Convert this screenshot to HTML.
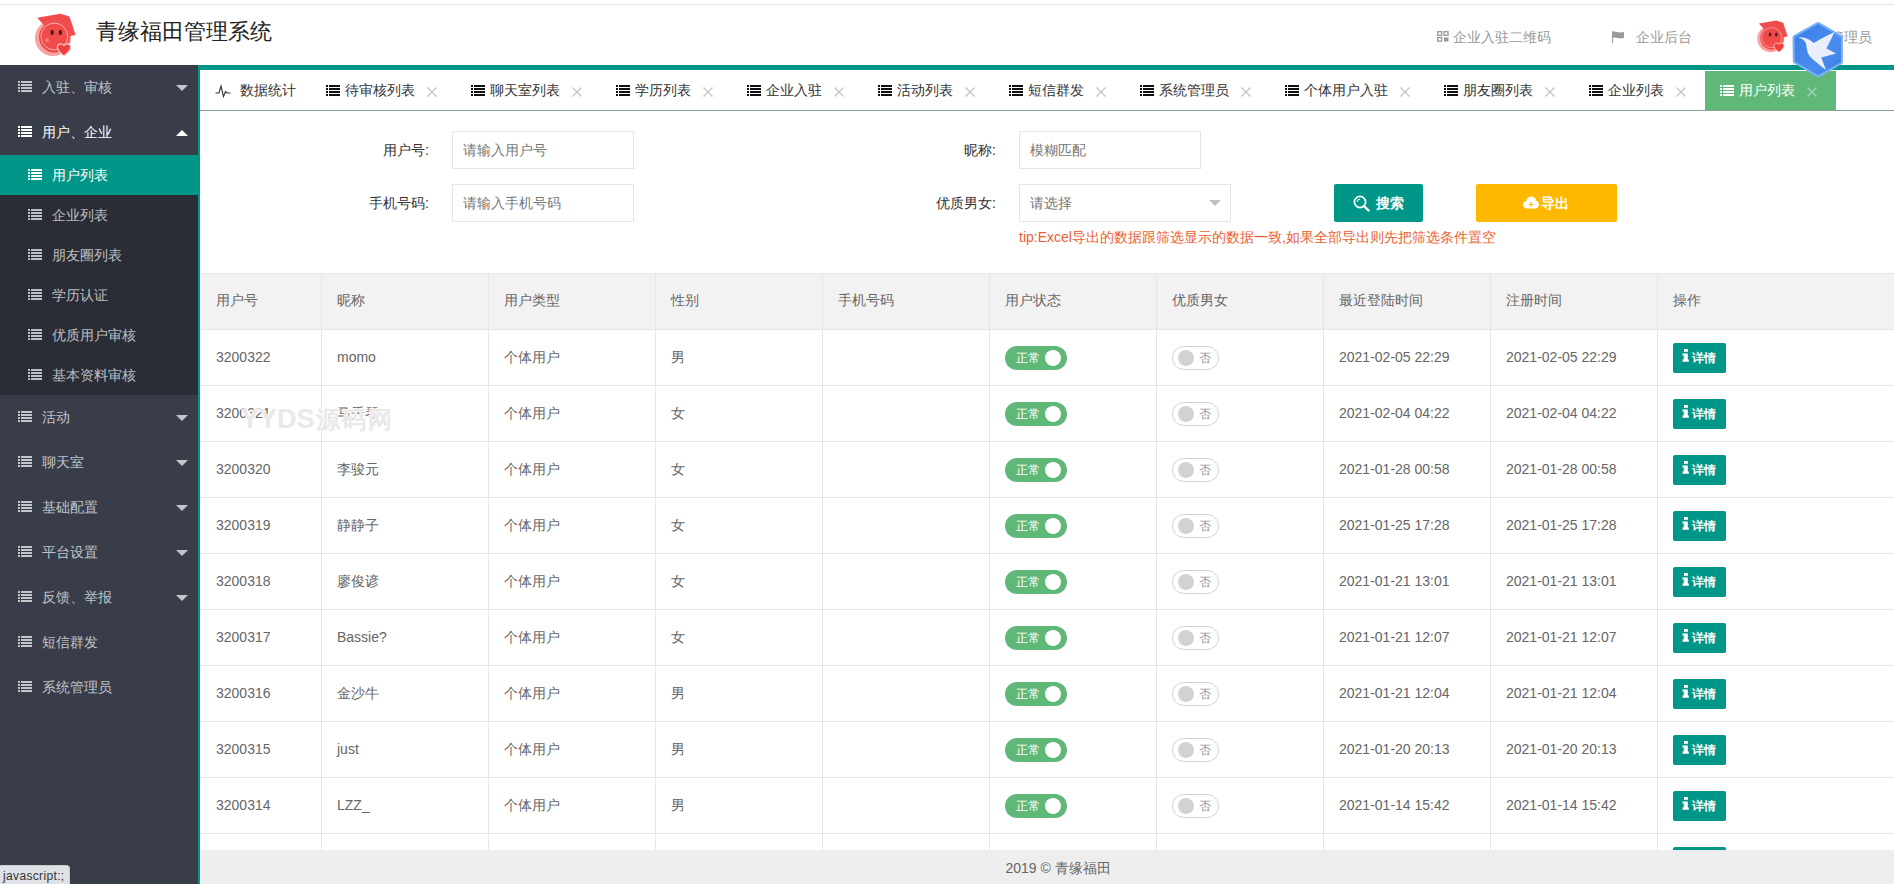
<!DOCTYPE html>
<html><head><meta charset="utf-8">
<style>
*{box-sizing:border-box;margin:0;padding:0}
html,body{width:1894px;height:884px;overflow:hidden;background:#fff;font-family:"Liberation Sans",sans-serif;font-size:14px;color:#333}
.abs{position:absolute}
#topline{left:0;top:4px;width:1894px;height:1px;background:#e2e2e2}
#title{left:96px;top:17px;font-size:22px;line-height:30px;color:#222;white-space:nowrap}
.hdr{top:27px;line-height:20px;color:#999;white-space:nowrap}
#side{left:0;top:65px;width:198px;height:819px;background:#393D49}
.ni{position:absolute;left:0;width:198px;height:45px;line-height:45px;color:rgba(255,255,255,.7);white-space:nowrap}
.ni .ic{position:absolute;left:18px;top:16px}
.ni span{position:absolute;left:42px;top:0}
.ni .arr{position:absolute;left:176px;top:20px;width:0;height:0;border-left:6px solid transparent;border-right:6px solid transparent;border-top:6px solid rgba(255,255,255,.7)}
.ni .arr.up{border-top:0;border-bottom:6px solid #fff}
.sub{position:absolute;left:0;width:198px;height:40px;line-height:40px;background:#2A2D36;color:rgba(255,255,255,.7);white-space:nowrap}
.sub .ic{position:absolute;left:28px;top:14px}
.sub span{position:absolute;left:52px;top:0}
.sub.on{background:#009688;color:#fff}
#mainborder{left:198px;top:65px;width:2px;height:819px;background:#009688}
#maintop{left:198px;top:65px;width:1696px;height:5px;background:#009688}
#tabline{left:200px;top:110px;width:1694px;height:1px;background:#8a9f90}
.tab{position:absolute;top:71px;height:39px;line-height:39px;color:#333;white-space:nowrap}
.tab .ic{position:absolute;left:15px;top:14px}
.tab span{position:absolute;left:34px;top:0}
.tab .x{position:absolute;top:16px}
.tab.on{background:#5FB878;color:#fff}
.lbl{position:absolute;line-height:20px;text-align:right;color:#333;white-space:nowrap}
.inp{position:absolute;height:38px;border:1px solid #e6e6e6;line-height:36px;padding-left:10px;color:#777;white-space:nowrap}
.btn{position:absolute;top:184px;height:38px;border-radius:2px;color:#fff;white-space:nowrap}
#tip{left:1019px;top:227px;font-size:14px;line-height:20px;color:#ea5f35;white-space:nowrap}
#thead{left:200px;top:273px;width:1694px;height:56px;background:#f2f2f2}
.hl{position:absolute;left:200px;width:1694px;height:1px;background:#e6e6e6}
.vl{position:absolute;top:273px;width:1px;height:577px;background:#e6e6e6}
.c{position:absolute;line-height:20px;color:#666;white-space:nowrap}
.sw{position:absolute;height:24px;border-radius:20px;}
.sw.on{width:62px;background:#5FB878}
.sw.on i{position:absolute;left:40px;top:4px;width:16px;height:16px;border-radius:50%;background:#fff}
.sw.on em{position:absolute;left:11px;top:0;line-height:24px;font-size:12px;font-style:normal;color:#fff}
.sw.off{width:47px;border:1px solid #d2d2d2;background:#fff}
.sw.off i{position:absolute;left:5px;top:3px;width:16px;height:16px;border-radius:50%;background:#d2d2d2}
.sw.off em{position:absolute;left:26px;top:0;line-height:22px;font-size:12px;font-style:normal;color:#999}
.det{position:absolute;width:53px;height:30px;border-radius:2px;background:#009688;color:#fff;font-size:12px;line-height:30px;white-space:nowrap}
.wm{left:241px;top:404px;font-size:27px;font-weight:bold;line-height:30px;letter-spacing:0;white-space:nowrap}
.wc{font-size:24px;letter-spacing:2px;margin-left:1px}
#footer{left:200px;top:850px;width:1694px;height:34px;background:#eee;text-align:center;line-height:37px;padding-left:22px;color:#666}
#status{left:0;top:865px;width:70px;height:19px;background:#dee1e6;border-top-right-radius:4px;border:1px solid #c9ccd1;border-left:0;border-bottom:0;font-size:12px;line-height:21px;padding-left:3px;letter-spacing:0.35px;color:#333}
</style></head><body>
<div class="abs" id="topline"></div>
<!-- logo -->
<svg class="abs" style="left:28px;top:8px" width="56" height="54" viewBox="0 0 56 54">
  <path d="M9.2 9.8 L32.4 5.8 L41.5 8.5 L47.6 26.9 L42 28 L24 26 Z" fill="#f04c4c"/>
  <circle cx="25" cy="30" r="18" fill="#f25656" opacity="0.55"/>
  <circle cx="26.5" cy="29" r="15.5" fill="#f04a4a"/>
  <circle cx="26.3" cy="28.5" r="13.4" fill="none" stroke="#fbb0b0" stroke-width="1"/>
  <ellipse cx="24.1" cy="24.4" rx="1.6" ry="2.6" fill="#4a1818"/>
  <ellipse cx="32.4" cy="24.4" rx="1.6" ry="2.6" fill="#4a1818"/>
  <circle cx="19" cy="32" r="2" fill="#f78080"/>
  <path d="M36 48 C31 44 28.5 41 29.5 38 C30.5 35.5 34 35 36 37.5 C38 35 41.5 35.5 42.5 38 C43.5 41 41 44 36 48 Z" fill="#ee3e3e" stroke="#fbd0d0" stroke-width="1.2"/>
</svg>
<div class="abs" id="title">青缘福田管理系统</div>
<!-- header right -->
<svg class="abs" style="left:1437px;top:31px" width="12" height="11" viewBox="0 0 12 11"><g fill="none" stroke="#999" stroke-width="1.3"><rect x="0.7" y="0.7" width="4" height="3.6"/><rect x="7" y="0.7" width="4" height="3.6"/><rect x="0.7" y="6.5" width="4" height="3.6"/></g><rect x="7" y="6.5" width="4.5" height="4" fill="#999"/></svg>
<div class="abs hdr" style="left:1453px">企业入驻二维码</div>
<svg class="abs" style="left:1611px;top:31px" width="14" height="12" viewBox="0 0 14 12"><path d="M1 0 L2 0 L2 12 L1 12 Z" fill="#999"/><path d="M2 1 C5 -0.5 7 2.5 13 1 L13 7 C7 8.5 5 5.5 2 7 Z" fill="#999"/></svg>
<div class="abs hdr" style="left:1636px">企业后台</div>
<svg class="abs" style="left:1752px;top:16px" width="42" height="41" viewBox="0 0 56 54">
  <path d="M9.2 9.8 L32.4 5.8 L41.5 8.5 L47.6 26.9 L42 28 L24 26 Z" fill="#f04c4c"/>
  <circle cx="25" cy="30" r="18" fill="#f25656" opacity="0.55"/>
  <circle cx="26.5" cy="29" r="15.5" fill="#f04a4a"/>
  <circle cx="26.3" cy="28.5" r="13.4" fill="none" stroke="#fbb0b0" stroke-width="1"/>
  <ellipse cx="24.1" cy="24.4" rx="1.6" ry="2.6" fill="#4a1818"/>
  <ellipse cx="32.4" cy="24.4" rx="1.6" ry="2.6" fill="#4a1818"/>
  <path d="M36 48 C31 44 28.5 41 29.5 38 C30.5 35.5 34 35 36 37.5 C38 35 41.5 35.5 42.5 38 C43.5 41 41 44 36 48 Z" fill="#ee3e3e" stroke="#fbd0d0" stroke-width="1.2"/>
</svg>
<div class="abs hdr" style="left:1830px">管理员</div>


<!-- sidebar -->
<div class="abs" id="side">
  <div class="ni" style="top:0"><svg class="ic" width="14" height="11"><use href="#li"/></svg><span>入驻、审核</span><i class="arr"></i></div>
  <div class="ni" style="top:45px;color:#fff"><svg class="ic" width="14" height="11" style="color:#fff"><use href="#li"/></svg><span>用户、企业</span><i class="arr up"></i></div>
  <div class="sub on" style="top:90px"><svg class="ic" width="14" height="11"><use href="#li"/></svg><span>用户列表</span></div>
  <div class="sub" style="top:130px"><svg class="ic" width="14" height="11"><use href="#li"/></svg><span>企业列表</span></div>
  <div class="sub" style="top:170px"><svg class="ic" width="14" height="11"><use href="#li"/></svg><span>朋友圈列表</span></div>
  <div class="sub" style="top:210px"><svg class="ic" width="14" height="11"><use href="#li"/></svg><span>学历认证</span></div>
  <div class="sub" style="top:250px"><svg class="ic" width="14" height="11"><use href="#li"/></svg><span>优质用户审核</span></div>
  <div class="sub" style="top:290px"><svg class="ic" width="14" height="11"><use href="#li"/></svg><span>基本资料审核</span></div>
  <div class="ni" style="top:330px"><svg class="ic" width="14" height="11"><use href="#li"/></svg><span>活动</span><i class="arr"></i></div>
  <div class="ni" style="top:375px"><svg class="ic" width="14" height="11"><use href="#li"/></svg><span>聊天室</span><i class="arr"></i></div>
  <div class="ni" style="top:420px"><svg class="ic" width="14" height="11"><use href="#li"/></svg><span>基础配置</span><i class="arr"></i></div>
  <div class="ni" style="top:465px"><svg class="ic" width="14" height="11"><use href="#li"/></svg><span>平台设置</span><i class="arr"></i></div>
  <div class="ni" style="top:510px"><svg class="ic" width="14" height="11"><use href="#li"/></svg><span>反馈、举报</span><i class="arr"></i></div>
  <div class="ni" style="top:555px"><svg class="ic" width="14" height="11"><use href="#li"/></svg><span>短信群发</span></div>
  <div class="ni" style="top:600px"><svg class="ic" width="14" height="11"><use href="#li"/></svg><span>系统管理员</span></div>
</div>
<svg width="0" height="0" style="position:absolute">
  <defs>
    <g id="li" fill="currentColor"><rect x="0" y="0" width="2" height="2"/><rect x="3" y="0" width="11" height="2"/><rect x="0" y="3" width="2" height="2"/><rect x="3" y="3" width="11" height="2"/><rect x="0" y="6" width="2" height="2"/><rect x="3" y="6" width="11" height="2"/><rect x="0" y="9" width="2" height="2"/><rect x="3" y="9" width="11" height="2"/></g>
    <g id="xx" stroke="currentColor" stroke-width="1.4" fill="none"><path d="M0.5 0.5 L9.5 9.5 M9.5 0.5 L0.5 9.5"/></g>
  </defs>
</svg>

<div class="abs" id="mainborder"></div>
<div class="abs" id="maintop"></div>
<div class="abs" id="tabline"></div>
<!-- TABS -->
<div id="tabs"><div class="tab" style="left:200px;width:111px"><svg class="abs" style="left:15px;top:13px" width="16" height="14" viewBox="0 0 16 14"><path d="M0.5 9 L4 9 L6 2 L8.5 12.5 L10.5 7.5 L12 9 L15.5 9" fill="none" stroke="#333" stroke-width="1.1"/></svg><span style="left:40px">数据统计</span></div><div class="tab" style="left:311px;width:145px"><svg class="ic" width="14" height="11" style="color:#111"><use href="#li"/></svg><span>待审核列表</span><svg class="x" style="left:116px;color:#c6c6c6" width="10" height="10"><use href="#xx"/></svg></div><div class="tab" style="left:456px;width:145px"><svg class="ic" width="14" height="11" style="color:#111"><use href="#li"/></svg><span>聊天室列表</span><svg class="x" style="left:116px;color:#c6c6c6" width="10" height="10"><use href="#xx"/></svg></div><div class="tab" style="left:601px;width:131px"><svg class="ic" width="14" height="11" style="color:#111"><use href="#li"/></svg><span>学历列表</span><svg class="x" style="left:102px;color:#c6c6c6" width="10" height="10"><use href="#xx"/></svg></div><div class="tab" style="left:732px;width:131px"><svg class="ic" width="14" height="11" style="color:#111"><use href="#li"/></svg><span>企业入驻</span><svg class="x" style="left:102px;color:#c6c6c6" width="10" height="10"><use href="#xx"/></svg></div><div class="tab" style="left:863px;width:131px"><svg class="ic" width="14" height="11" style="color:#111"><use href="#li"/></svg><span>活动列表</span><svg class="x" style="left:102px;color:#c6c6c6" width="10" height="10"><use href="#xx"/></svg></div><div class="tab" style="left:994px;width:131px"><svg class="ic" width="14" height="11" style="color:#111"><use href="#li"/></svg><span>短信群发</span><svg class="x" style="left:102px;color:#c6c6c6" width="10" height="10"><use href="#xx"/></svg></div><div class="tab" style="left:1125px;width:145px"><svg class="ic" width="14" height="11" style="color:#111"><use href="#li"/></svg><span>系统管理员</span><svg class="x" style="left:116px;color:#c6c6c6" width="10" height="10"><use href="#xx"/></svg></div><div class="tab" style="left:1270px;width:159px"><svg class="ic" width="14" height="11" style="color:#111"><use href="#li"/></svg><span>个体用户入驻</span><svg class="x" style="left:130px;color:#c6c6c6" width="10" height="10"><use href="#xx"/></svg></div><div class="tab" style="left:1429px;width:145px"><svg class="ic" width="14" height="11" style="color:#111"><use href="#li"/></svg><span>朋友圈列表</span><svg class="x" style="left:116px;color:#c6c6c6" width="10" height="10"><use href="#xx"/></svg></div><div class="tab" style="left:1574px;width:131px"><svg class="ic" width="14" height="11" style="color:#111"><use href="#li"/></svg><span>企业列表</span><svg class="x" style="left:102px;color:#c6c6c6" width="10" height="10"><use href="#xx"/></svg></div><div class="tab on" style="left:1705px;width:131px"><svg class="ic" width="14" height="11" style="color:#fff"><use href="#li"/></svg><span>用户列表</span><svg class="x" style="left:102px;color:#a8d5b5" width="10" height="10"><use href="#xx"/></svg></div></div>

<!-- FORM -->
<div class="lbl" style="left:349px;top:140px;width:80px">用户号:</div>
<div class="inp" style="left:452px;top:131px;width:182px">请输入用户号</div>
<div class="lbl" style="left:349px;top:193px;width:80px">手机号码:</div>
<div class="inp" style="left:452px;top:184px;width:182px">请输入手机号码</div>
<div class="lbl" style="left:916px;top:140px;width:80px">昵称:</div>
<div class="inp" style="left:1019px;top:131px;width:182px">模糊匹配</div>
<div class="lbl" style="left:916px;top:193px;width:80px">优质男女:</div>
<div class="inp" style="left:1019px;top:184px;width:212px">请选择</div>
<i class="abs" style="left:1209px;top:200px;width:0;height:0;border-left:6px solid transparent;border-right:6px solid transparent;border-top:6px solid #c2c2c2"></i>
<div class="btn" style="left:1334px;width:89px;background:#009688"><svg class="abs" style="left:19px;top:11px" width="17" height="17" viewBox="0 0 17 17"><circle cx="7" cy="7" r="5.6" fill="none" stroke="#fff" stroke-width="1.7"/><path d="M4.2 7 A2.8 2.8 0 0 1 7 4.2" fill="none" stroke="#fff" stroke-width="1"/><path d="M11 11 L15.5 15.5" stroke="#fff" stroke-width="2.4" stroke-linecap="round"/></svg><span class="abs" style="left:42px;top:9px;line-height:20px;font-weight:bold">搜索</span></div>
<div class="btn" style="left:1476px;width:141px;background:#FFB800"><svg class="abs" style="left:47px;top:12px" width="16" height="13" viewBox="0 0 16 13"><path d="M4 12.5 C1.5 12.5 0 10.8 0 8.8 C0 6.9 1.4 5.4 3.2 5.3 C3.6 2.5 5.8 0.5 8.4 0.5 C11 0.5 13 2.3 13.3 4.8 C14.9 5.1 16 6.6 16 8.5 C16 10.7 14.4 12.5 12.3 12.5 Z" fill="#fff"/><path d="M8 6 L8 11 M5.8 8.5 L10.2 8.5" stroke="#FFB800" stroke-width="1.2"/></svg><span class="abs" style="left:65px;top:9px;line-height:20px;font-weight:bold">导出</span></div>
<div class="abs" id="tip">tip:Excel导出的数据跟筛选显示的数据一致,如果全部导出则先把筛选条件置空</div>

<!-- TABLE -->
<div class="abs" id="thead"></div>
<div id="table"><div class="hl" style="top:273px"></div><div class="vl" style="left:321px"></div><div class="vl" style="left:488px"></div><div class="vl" style="left:655px"></div><div class="vl" style="left:822px"></div><div class="vl" style="left:989px"></div><div class="vl" style="left:1156px"></div><div class="vl" style="left:1323px"></div><div class="vl" style="left:1490px"></div><div class="vl" style="left:1657px"></div><div class="c" style="left:216px;top:290px">用户号</div><div class="c" style="left:337px;top:290px">昵称</div><div class="c" style="left:504px;top:290px">用户类型</div><div class="c" style="left:671px;top:290px">性别</div><div class="c" style="left:838px;top:290px">手机号码</div><div class="c" style="left:1005px;top:290px">用户状态</div><div class="c" style="left:1172px;top:290px">优质男女</div><div class="c" style="left:1339px;top:290px">最近登陆时间</div><div class="c" style="left:1506px;top:290px">注册时间</div><div class="c" style="left:1673px;top:290px">操作</div><div class="hl" style="top:329px"></div><div class="c" style="left:216px;top:347px">3200322</div><div class="c" style="left:337px;top:347px">momo</div><div class="c" style="left:504px;top:347px">个体用户</div><div class="c" style="left:671px;top:347px">男</div><div class="c" style="left:1339px;top:347px">2021-02-05 22:29</div><div class="c" style="left:1506px;top:347px">2021-02-05 22:29</div><div class="sw on" style="left:1005px;top:346px"><em>正常</em><i></i></div><div class="sw off" style="left:1172px;top:346px"><i></i><em>否</em></div><div class="det" style="left:1673px;top:343px"><svg class="abs" style="left:0;top:0" width="20" height="30"><rect x="11" y="6" width="3.8" height="2.8" fill="#fff"/><path d="M9.5 10.5 H14.8 V16.5 H15.8 V18.7 H9.5 V16.5 H10.8 V12.6 H9.5 Z" fill="#fff"/></svg><span class="abs" style="left:19px;top:0;font-weight:bold">详情</span></div><div class="hl" style="top:385px"></div><div class="c" style="left:216px;top:403px">3200321</div><div class="c" style="left:337px;top:403px">马秀琴</div><div class="c" style="left:504px;top:403px">个体用户</div><div class="c" style="left:671px;top:403px">女</div><div class="c" style="left:1339px;top:403px">2021-02-04 04:22</div><div class="c" style="left:1506px;top:403px">2021-02-04 04:22</div><div class="sw on" style="left:1005px;top:402px"><em>正常</em><i></i></div><div class="sw off" style="left:1172px;top:402px"><i></i><em>否</em></div><div class="det" style="left:1673px;top:399px"><svg class="abs" style="left:0;top:0" width="20" height="30"><rect x="11" y="6" width="3.8" height="2.8" fill="#fff"/><path d="M9.5 10.5 H14.8 V16.5 H15.8 V18.7 H9.5 V16.5 H10.8 V12.6 H9.5 Z" fill="#fff"/></svg><span class="abs" style="left:19px;top:0;font-weight:bold">详情</span></div><div class="hl" style="top:441px"></div><div class="c" style="left:216px;top:459px">3200320</div><div class="c" style="left:337px;top:459px">李骏元</div><div class="c" style="left:504px;top:459px">个体用户</div><div class="c" style="left:671px;top:459px">女</div><div class="c" style="left:1339px;top:459px">2021-01-28 00:58</div><div class="c" style="left:1506px;top:459px">2021-01-28 00:58</div><div class="sw on" style="left:1005px;top:458px"><em>正常</em><i></i></div><div class="sw off" style="left:1172px;top:458px"><i></i><em>否</em></div><div class="det" style="left:1673px;top:455px"><svg class="abs" style="left:0;top:0" width="20" height="30"><rect x="11" y="6" width="3.8" height="2.8" fill="#fff"/><path d="M9.5 10.5 H14.8 V16.5 H15.8 V18.7 H9.5 V16.5 H10.8 V12.6 H9.5 Z" fill="#fff"/></svg><span class="abs" style="left:19px;top:0;font-weight:bold">详情</span></div><div class="hl" style="top:497px"></div><div class="c" style="left:216px;top:515px">3200319</div><div class="c" style="left:337px;top:515px">静静子</div><div class="c" style="left:504px;top:515px">个体用户</div><div class="c" style="left:671px;top:515px">女</div><div class="c" style="left:1339px;top:515px">2021-01-25 17:28</div><div class="c" style="left:1506px;top:515px">2021-01-25 17:28</div><div class="sw on" style="left:1005px;top:514px"><em>正常</em><i></i></div><div class="sw off" style="left:1172px;top:514px"><i></i><em>否</em></div><div class="det" style="left:1673px;top:511px"><svg class="abs" style="left:0;top:0" width="20" height="30"><rect x="11" y="6" width="3.8" height="2.8" fill="#fff"/><path d="M9.5 10.5 H14.8 V16.5 H15.8 V18.7 H9.5 V16.5 H10.8 V12.6 H9.5 Z" fill="#fff"/></svg><span class="abs" style="left:19px;top:0;font-weight:bold">详情</span></div><div class="hl" style="top:553px"></div><div class="c" style="left:216px;top:571px">3200318</div><div class="c" style="left:337px;top:571px">廖俊谚</div><div class="c" style="left:504px;top:571px">个体用户</div><div class="c" style="left:671px;top:571px">女</div><div class="c" style="left:1339px;top:571px">2021-01-21 13:01</div><div class="c" style="left:1506px;top:571px">2021-01-21 13:01</div><div class="sw on" style="left:1005px;top:570px"><em>正常</em><i></i></div><div class="sw off" style="left:1172px;top:570px"><i></i><em>否</em></div><div class="det" style="left:1673px;top:567px"><svg class="abs" style="left:0;top:0" width="20" height="30"><rect x="11" y="6" width="3.8" height="2.8" fill="#fff"/><path d="M9.5 10.5 H14.8 V16.5 H15.8 V18.7 H9.5 V16.5 H10.8 V12.6 H9.5 Z" fill="#fff"/></svg><span class="abs" style="left:19px;top:0;font-weight:bold">详情</span></div><div class="hl" style="top:609px"></div><div class="c" style="left:216px;top:627px">3200317</div><div class="c" style="left:337px;top:627px">Bassie?</div><div class="c" style="left:504px;top:627px">个体用户</div><div class="c" style="left:671px;top:627px">女</div><div class="c" style="left:1339px;top:627px">2021-01-21 12:07</div><div class="c" style="left:1506px;top:627px">2021-01-21 12:07</div><div class="sw on" style="left:1005px;top:626px"><em>正常</em><i></i></div><div class="sw off" style="left:1172px;top:626px"><i></i><em>否</em></div><div class="det" style="left:1673px;top:623px"><svg class="abs" style="left:0;top:0" width="20" height="30"><rect x="11" y="6" width="3.8" height="2.8" fill="#fff"/><path d="M9.5 10.5 H14.8 V16.5 H15.8 V18.7 H9.5 V16.5 H10.8 V12.6 H9.5 Z" fill="#fff"/></svg><span class="abs" style="left:19px;top:0;font-weight:bold">详情</span></div><div class="hl" style="top:665px"></div><div class="c" style="left:216px;top:683px">3200316</div><div class="c" style="left:337px;top:683px">金沙牛</div><div class="c" style="left:504px;top:683px">个体用户</div><div class="c" style="left:671px;top:683px">男</div><div class="c" style="left:1339px;top:683px">2021-01-21 12:04</div><div class="c" style="left:1506px;top:683px">2021-01-21 12:04</div><div class="sw on" style="left:1005px;top:682px"><em>正常</em><i></i></div><div class="sw off" style="left:1172px;top:682px"><i></i><em>否</em></div><div class="det" style="left:1673px;top:679px"><svg class="abs" style="left:0;top:0" width="20" height="30"><rect x="11" y="6" width="3.8" height="2.8" fill="#fff"/><path d="M9.5 10.5 H14.8 V16.5 H15.8 V18.7 H9.5 V16.5 H10.8 V12.6 H9.5 Z" fill="#fff"/></svg><span class="abs" style="left:19px;top:0;font-weight:bold">详情</span></div><div class="hl" style="top:721px"></div><div class="c" style="left:216px;top:739px">3200315</div><div class="c" style="left:337px;top:739px">just</div><div class="c" style="left:504px;top:739px">个体用户</div><div class="c" style="left:671px;top:739px">男</div><div class="c" style="left:1339px;top:739px">2021-01-20 20:13</div><div class="c" style="left:1506px;top:739px">2021-01-20 20:13</div><div class="sw on" style="left:1005px;top:738px"><em>正常</em><i></i></div><div class="sw off" style="left:1172px;top:738px"><i></i><em>否</em></div><div class="det" style="left:1673px;top:735px"><svg class="abs" style="left:0;top:0" width="20" height="30"><rect x="11" y="6" width="3.8" height="2.8" fill="#fff"/><path d="M9.5 10.5 H14.8 V16.5 H15.8 V18.7 H9.5 V16.5 H10.8 V12.6 H9.5 Z" fill="#fff"/></svg><span class="abs" style="left:19px;top:0;font-weight:bold">详情</span></div><div class="hl" style="top:777px"></div><div class="c" style="left:216px;top:795px">3200314</div><div class="c" style="left:337px;top:795px">LZZ_</div><div class="c" style="left:504px;top:795px">个体用户</div><div class="c" style="left:671px;top:795px">男</div><div class="c" style="left:1339px;top:795px">2021-01-14 15:42</div><div class="c" style="left:1506px;top:795px">2021-01-14 15:42</div><div class="sw on" style="left:1005px;top:794px"><em>正常</em><i></i></div><div class="sw off" style="left:1172px;top:794px"><i></i><em>否</em></div><div class="det" style="left:1673px;top:791px"><svg class="abs" style="left:0;top:0" width="20" height="30"><rect x="11" y="6" width="3.8" height="2.8" fill="#fff"/><path d="M9.5 10.5 H14.8 V16.5 H15.8 V18.7 H9.5 V16.5 H10.8 V12.6 H9.5 Z" fill="#fff"/></svg><span class="abs" style="left:19px;top:0;font-weight:bold">详情</span></div><div class="hl" style="top:833px"></div><div class="det" style="left:1673px;top:847px"></div><div class="abs wm" style="color:#fff;-webkit-text-stroke:1px #fff">YYDS<span class="wc">源码网</span></div><div class="abs wm" style="color:#e9e9e9">YYDS<span class="wc">源码网</span></div></div>

<div class="abs" id="footer">2019 © 青缘福田</div>
<div class="abs" id="status">javascript:;</div>
<!-- blue hexagon -->
<svg class="abs" style="left:1788px;top:18px" width="60" height="64" viewBox="0 0 60 64">
  <defs><linearGradient id="hg" x1="0" y1="0" x2="1" y2="1"><stop offset="0" stop-color="#3a7de8"/><stop offset="0.6" stop-color="#4a8cef"/><stop offset="1" stop-color="#3f80e6"/></linearGradient></defs>
  <path d="M30 6.5 L52.4 19.4 L52.4 44 L30.2 56.8 L7.3 43.2 L7 19.4 Z" fill="#78b0f7" stroke="#78b0f7" stroke-width="5" stroke-linejoin="round"/>
  <path d="M30 6.5 L52.4 19.4 L52.4 44 L30.2 56.8 L7.3 43.2 L7 19.4 Z" fill="url(#hg)" stroke="url(#hg)" stroke-width="1" stroke-linejoin="round"/>
  <path d="M10.1 19.4 C13 19.2 17 19.6 20.3 21.2 C22.5 22.3 24.2 23.6 25.7 25 L32.6 21 L46.3 14.1 C44.5 19 41.5 24.5 38.4 30.4 L48.1 35.5 L33.3 39.4 C34.8 43.5 36.5 47.8 38 52.1 C34.5 49.5 31 46.5 27.5 43.4 C24.5 41 21.5 39 20 35.5 C18.8 32.5 18.8 29 18 25.8 C17.2 23.2 15.5 21.8 13.5 20.8 C12.4 20.2 11.2 19.8 10.1 19.4 Z" fill="#e9f0fb"/>
</svg>
</body></html>
